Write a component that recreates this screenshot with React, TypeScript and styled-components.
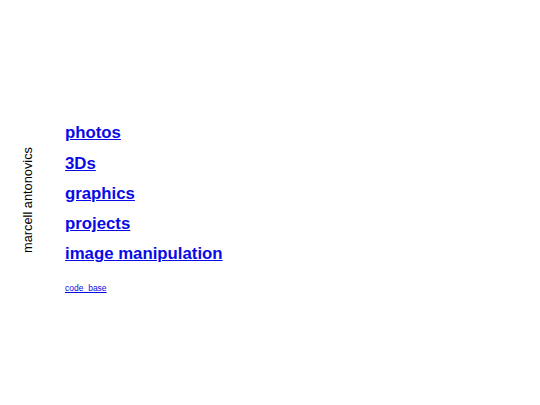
import { createGlobalStyle, styled } from "styled-components";

const GlobalStyle = createGlobalStyle`
  html, body {
    margin: 0;
    padding: 0;
    background: #fff;
    font-family: "Liberation Sans", Arial, sans-serif;
  }
`;

const Page = styled.div`
  display: flex;
  align-items: center;
  height: 405px;
  padding-top: 6px;
  box-sizing: border-box;
`;

const Wrap = styled.div`
  display: flex;
  align-items: center;
`;

const Name = styled.div`
  writing-mode: vertical-rl;
  transform: rotate(180deg);
  font-size: 12.8px;
  color: #000;
  width: 16px;
  margin-left: 20px;
  margin-right: 29px;
  margin-bottom: 11px;
`;

const Menu = styled.nav`
  display: flex;
  flex-direction: column;
`;

const BigLink = styled.a`
  display: block;
  font-size: 16.8px;
  font-weight: bold;
  line-height: 30.3px;
  color: #0a0ae6;
  text-decoration: underline;
`;

const SmallLink = styled.a`
  display: block;
  margin-top: 13px;
  font-size: 8.5px;
  color: #0a0ae6;
  text-decoration: underline;
`;

const links = ["photos", "3Ds", "graphics", "projects", "image manipulation"];

export default function App() {
  return (
    <>
      <GlobalStyle />
      <Page>
        <Wrap>
          <Name>marcell antonovics</Name>
          <Menu>
            {links.map((l) => (
              <BigLink key={l} href="#">
                {l}
              </BigLink>
            ))}
            <SmallLink href="#">code_base</SmallLink>
          </Menu>
        </Wrap>
      </Page>
    </>
  );
}
